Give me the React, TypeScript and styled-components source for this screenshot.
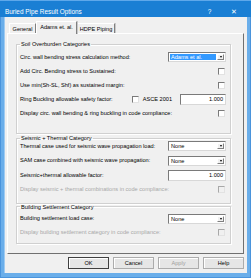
import styled, { createGlobalStyle } from "styled-components";

const GlobalStyle = createGlobalStyle`
	html, body {
		margin: 0;
		padding: 0;
		background: #ffffff;
	}

	body {
		font-family: "Liberation Sans", Arial, sans-serif;
	}
`;

const FONT = "5.6px";

type Control =
	| { kind: "select"; value: string; selected?: boolean }
	| { kind: "check" }
	| { kind: "input"; value: string; width: number }
	| { kind: "asce"; value: string };

type Row = {
	label: string;
	control: Control;
	disabled?: boolean;
};

type Group = {
	title: string;
	top: number;
	bottom: number;
	gap: number;
	marginTop: number;
	rows: Row[];
};

const groups: Group[] = [
	{
		title: "Soil Overburden Categories",
		top: 5,
		bottom: 15,
		gap: 4,
		marginTop: 0,
		rows: [
			{
				label: "Circ. wall bending stress calculation method:",
				control: { kind: "select", value: "Adams et al.", selected: true },
			},
			{ label: "Add Circ. Bending stress to Sustained:", control: { kind: "check" } },
			{ label: "Use min(Sh-SL, Shf) as sustained margin:", control: { kind: "check" } },
			{
				label: "Ring Buckling allowable safety factor:",
				control: { kind: "asce", value: "1.000" },
			},
			{
				label: "Display circ. wall bending & ring buckling in code compliance:",
				control: { kind: "check" },
			},
		],
	},
	{
		title: "Seismic + Thermal Category",
		top: 0,
		bottom: 8,
		gap: 4.5,
		marginTop: 1,
		rows: [
			{
				label: "Thermal case used for seismic wave propagation load:",
				control: { kind: "select", value: "None" },
			},
			{
				label: "SAM case combined with seismic wave propagation:",
				control: { kind: "select", value: "None" },
			},
			{
				label: "Seismic+thermal allowable factor:",
				control: { kind: "input", value: "1.000", width: 58 },
			},
			{
				label: "Display seismic + thermal combinations in code compliance:",
				control: { kind: "check" },
				disabled: true,
			},
		],
	},
	{
		title: "Building Settlement Category",
		top: 4,
		bottom: 5,
		gap: 4,
		marginTop: 0,
		rows: [
			{
				label: "Building settlement load case:",
				control: { kind: "select", value: "None" },
			},
			{
				label: "Display building settlement category in code compliance:",
				control: { kind: "check" },
				disabled: true,
			},
		],
	},
];

function renderControl(control: Control, disabled?: boolean) {
	switch (control.kind) {
		case "select":
			return (
				<Select>
					<SelectValue $selected={control.selected}>{control.value}</SelectValue>
					<SelectButton>
						<Arrow />
					</SelectButton>
				</Select>
			);
		case "check":
			return <CheckBox $disabled={disabled} />;
		case "input":
			return <TextInput $width={control.width}>{control.value}</TextInput>;
		case "asce":
			return (
				<AsceWrap>
					<CheckBox />
					<AsceLabel>ASCE 2001</AsceLabel>
					<TextInput $width={46}>{control.value}</TextInput>
				</AsceWrap>
			);
	}
}

export default function App() {
	return (
		<>
			<GlobalStyle />
			<Window>
				<TitleBar>
					<Title>Buried Pipe Result Options</Title>
					<TitleButtons>
						<TitleGlyph>?</TitleGlyph>
						<TitleGlyph>✕</TitleGlyph>
					</TitleButtons>
				</TitleBar>

				<Client>
					<TabRow>
						<Tab $width={27}>General</Tab>
						<Tab $width={41} $active>
							Adams et. al.
						</Tab>
						<Tab $width={38}>HDPE Piping</Tab>
					</TabRow>

					<Panel>
						{groups.map((group) => (
							<GroupBox key={group.title} $marginTop={group.marginTop}>
								<Legend>{group.title}</Legend>
								<Rows $top={group.top} $bottom={group.bottom} $gap={group.gap}>
									{group.rows.map((row) => (
										<OptionRow key={row.label}>
											<Label $disabled={row.disabled}>{row.label}</Label>
											{renderControl(row.control, row.disabled)}
										</OptionRow>
									))}
								</Rows>
							</GroupBox>
						))}
					</Panel>

					<ButtonRow>
						<Button $default>OK</Button>
						<Button>Cancel</Button>
						<Button $disabled>Apply</Button>
						<Button>Help</Button>
					</ButtonRow>
				</Client>
			</Window>
		</>
	);
}

const Window = styled.div`
	width: 251px;
	height: 278px;
	box-sizing: border-box;
	background: #6aaeea;
	border-left: 1px solid #4a94dc;
	border-right: 1px solid #4a94dc;
	border-bottom: 1px solid #4a94dc;

	display: flex;
	flex-direction: column;
`;

const TitleBar = styled.div`
	height: 17px;
	flex-shrink: 0;
	box-sizing: border-box;
	padding: 5px 0 0 5px;
	margin: 0 -1px;
	background: #1a7fd4;
	border-top: 1px solid #5ea8ea;
	color: #ffffff;

	display: flex;
	align-items: center;
	justify-content: space-between;
`;

const Title = styled.span`
	font-family: "Liberation Sans", Arial, sans-serif;
	font-size: 6.4px;
	line-height: 7px;
`;

const TitleButtons = styled.div`
	display: flex;
	gap: 17px;
	padding-right: 14px;
`;

const TitleGlyph = styled.span`
	font-size: 6.5px;
	line-height: 7px;
	width: 7px;
	text-align: center;
`;

const Client = styled.div`
	flex: 1;
	margin: 0 3px 4px 3px;
	background: #f0f0f0;
	box-shadow: inset 1px 0 #9fcbf2;

	display: flex;
	flex-direction: column;
`;

const TabRow = styled.div`
	height: 16px;
	flex-shrink: 0;
	padding-left: 5px;

	display: flex;
	align-items: flex-end;
`;

const Tab = styled.div<{ $width: number; $active?: boolean }>`
	width: ${(p) => p.$width}px;
	height: ${(p) => (p.$active ? 13 : 10)}px;
	margin-bottom: ${(p) => (p.$active ? -1 : 0)}px;
	box-sizing: border-box;
	background: #f0f0f0;
	border-top: 1px solid #ffffff;
	border-left: 1px solid #ffffff;
	border-right: 1px solid #808080;
	box-shadow: 1px 0 #c8c8c8;
	position: relative;
	z-index: ${(p) => (p.$active ? 1 : 0)};
	font-size: ${FONT};
	white-space: nowrap;
	color: #000000;

	display: flex;
	align-items: ${(p) => (p.$active ? "flex-start" : "center")};
	justify-content: center;
	padding-top: ${(p) => (p.$active ? 2 : 0)}px;
`;

const Panel = styled.div`
	height: 221px;
	flex-shrink: 0;
	margin: 0 3px;
	box-sizing: border-box;
	padding-top: 7px;
	background: #f0f0f0;
	border-top: 1px solid #ffffff;
	border-left: 1px solid #ffffff;
	border-right: 1px solid #707070;
	border-bottom: 1px solid #707070;

	display: flex;
	flex-direction: column;
`;

const GroupBox = styled.fieldset<{ $marginTop: number }>`
	margin: ${(p) => p.$marginTop}px 12px 0 8px;
	padding: 0 4px 0 3px;
	min-width: 0;
	border: 1px solid #d0d0d0;
	box-shadow: inset 1px 1px #ffffff, 1px 1px #ffffff;
`;

const Legend = styled.legend`
	padding: 0 1px;
	font-size: ${FONT};
	line-height: 6px;
	color: #000000;
`;

const Rows = styled.div<{ $top: number; $bottom: number; $gap: number }>`
	padding-top: ${(p) => p.$top}px;
	padding-bottom: ${(p) => p.$bottom}px;

	display: flex;
	flex-direction: column;
	gap: ${(p) => p.$gap}px;
`;

const OptionRow = styled.div`
	height: 10px;

	display: flex;
	align-items: center;
	justify-content: space-between;
`;

const Label = styled.span<{ $disabled?: boolean }>`
	font-size: ${FONT};
	line-height: 7px;
	white-space: nowrap;
	color: ${(p) => (p.$disabled ? "#a8a8a8" : "#000000")};
`;

const Select = styled.div`
	width: 58px;
	height: 10px;
	box-sizing: border-box;
	background: #ffffff;
	border: 1px solid #7a7a7a;
	border-right-color: #d8d8d8;
	border-bottom-color: #d8d8d8;
	padding: 1px;

	display: flex;
	align-items: stretch;
`;

const SelectValue = styled.span<{ $selected?: boolean }>`
	flex: 1;
	padding-left: 1px;
	font-size: ${FONT};
	line-height: 6px;
	white-space: nowrap;
	background: ${(p) => (p.$selected ? "#3399ff" : "transparent")};
	color: ${(p) => (p.$selected ? "#ffffff" : "#000000")};
`;

const SelectButton = styled.span`
	width: 7px;
	margin-left: 1px;
	box-sizing: border-box;
	background: #f0f0f0;
	border: 1px solid #ffffff;
	border-right-color: #808080;
	border-bottom-color: #808080;

	display: flex;
	align-items: center;
	justify-content: center;
`;

const Arrow = styled.span`
	width: 0;
	height: 0;
	border-left: 1.5px solid transparent;
	border-right: 1.5px solid transparent;
	border-top: 2px solid #000000;
`;

const CheckBox = styled.span<{ $disabled?: boolean }>`
	width: 7px;
	height: 7px;
	margin-right: 1px;
	box-sizing: border-box;
	flex-shrink: 0;
	background: ${(p) => (p.$disabled ? "#f0f0f0" : "#ffffff")};
	border: 1px solid ${(p) => (p.$disabled ? "#a8a8a8" : "#7a7a7a")};
	border-right-color: #e2e2e2;
	border-bottom-color: #e2e2e2;
`;

const TextInput = styled.span<{ $width: number }>`
	width: ${(p) => p.$width}px;
	height: 11px;
	box-sizing: border-box;
	background: #ffffff;
	border: 1px solid #7a7a7a;
	border-right-color: #d8d8d8;
	border-bottom-color: #d8d8d8;
	padding-right: 2px;
	font-size: ${FONT};
	line-height: 9px;
	text-align: right;
`;

const AsceWrap = styled.div`
	display: flex;
	align-items: center;
`;

const AsceLabel = styled.span`
	margin: 0 8px 0 3px;
	font-size: ${FONT};
	line-height: 7px;
`;

const ButtonRow = styled.div`
	margin-top: 3px;
	padding-right: 3px;

	display: flex;
	justify-content: flex-end;
	gap: 4px;
`;

const Button = styled.div<{ $default?: boolean; $disabled?: boolean }>`
	width: 41px;
	height: 12px;
	box-sizing: border-box;
	background: #e6e6e6;
	border: 1px solid ${(p) => (p.$default ? "#404040" : "#acacac")};
	box-shadow: inset 1px 1px #ffffff;
	font-size: ${FONT};
	color: ${(p) => (p.$disabled ? "#a0a0a0" : "#000000")};

	display: flex;
	align-items: center;
	justify-content: center;
`;
